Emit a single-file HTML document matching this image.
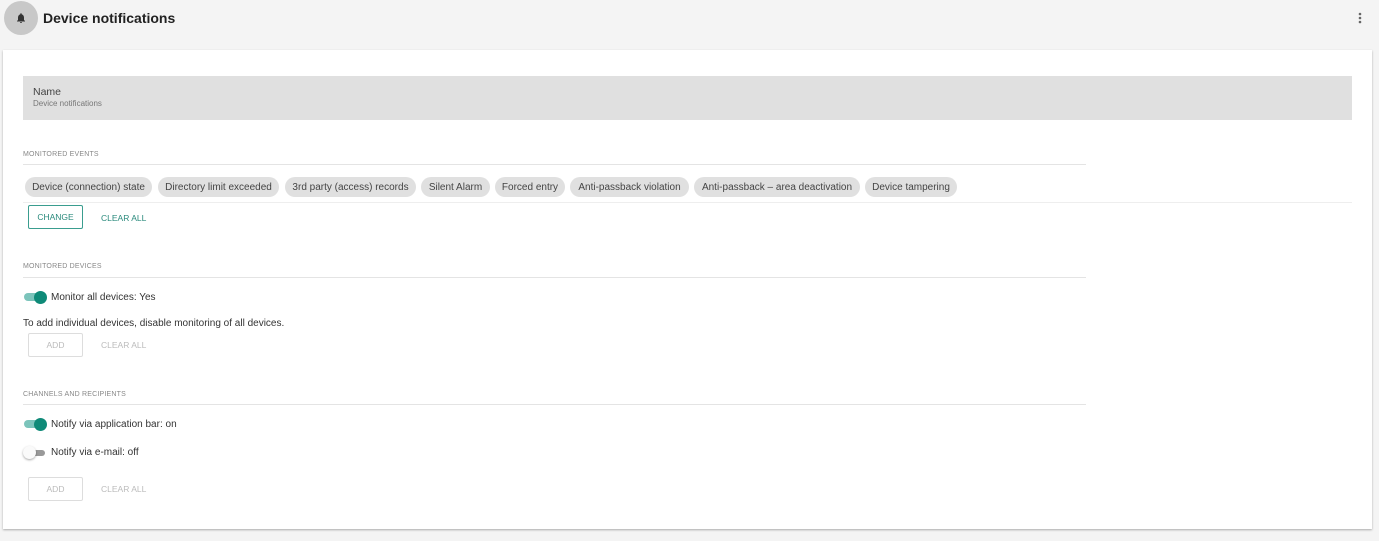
<!DOCTYPE html>
<html><head><meta charset="utf-8"><style>
*{margin:0;padding:0;box-sizing:border-box}
body{width:1379px;height:541px;background:#f4f4f4;font-family:"Liberation Sans",sans-serif;position:relative;overflow:hidden;color:#333}
.a{position:absolute}
.card{left:3px;top:50px;width:1369px;height:479px;background:#fff;box-shadow:0 1px 2px rgba(0,0,0,.3)}
.sec{font-size:7px;color:#888;letter-spacing:.2px}
.line{height:1px;background:#e4e4e4;width:1063px;left:23px}
.chip{top:177px;height:20px;border-radius:10px;background:#e0e0e0;font-size:10px;color:#444;text-align:center;line-height:21px;white-space:nowrap}
.btn{width:55px;height:24px;border:1px solid #ddd;border-radius:2px;font-size:8.5px;color:#bbb;text-align:center;line-height:22px;left:28px}
.clr{font-size:8.5px;left:101px;color:#bbb}
.tog{left:24px;width:22px;height:8px;border-radius:4px;background:#7cc4bb}
.tog i{position:absolute;right:-1px;top:-2.5px;width:13px;height:13px;border-radius:50%;background:#0f8a78}
.txt{font-size:10px;color:#333;left:51px}
</style></head><body>
<div class="a" style="left:4px;top:1px;width:34px;height:34px;border-radius:50%;background:#c8c8c8"></div>
<svg class="a" style="left:15px;top:12px" width="12" height="12" viewBox="0 0 24 24"><path fill="#333" d="M12 22c1.1 0 2-.9 2-2h-4c0 1.1.9 2 2 2zm6-6v-5c0-3.07-1.64-5.64-4.5-6.32V4c0-.83-.67-1.5-1.5-1.5s-1.5.67-1.5 1.5v.68C7.63 5.36 6 7.92 6 11v5l-2 2v1h16v-1l-2-2z"/></svg>
<div class="a" style="left:43px;top:10px;font-size:14px;font-weight:bold;color:#222">Device notifications</div>
<svg class="a" style="left:1358px;top:12px" width="4" height="12"><circle cx="2" cy="2" r="1.3" fill="#666"/><circle cx="2" cy="6" r="1.3" fill="#666"/><circle cx="2" cy="10" r="1.3" fill="#666"/></svg>
<div class="a card"></div>
<div class="a" style="left:23px;top:76px;width:1329px;height:44px;background:#e0e0e0"></div>
<div class="a" style="left:33px;top:86px;font-size:10.5px;color:#444">Name</div>
<div class="a" style="left:33px;top:99px;font-size:8px;color:#777">Device notifications</div>

<div class="a sec" style="left:23px;top:151px">MONITORED EVENTS</div>
<div class="a line" style="top:164px"></div>
<div class="a chip" style="left:25px;width:127px">Device (connection) state</div>
<div class="a chip" style="left:158px;width:121px">Directory limit exceeded</div>
<div class="a chip" style="left:285px;width:131px">3rd party (access) records</div>
<div class="a chip" style="left:421px;width:69px">Silent Alarm</div>
<div class="a chip" style="left:495px;width:70px">Forced entry</div>
<div class="a chip" style="left:570px;width:119px">Anti-passback violation</div>
<div class="a chip" style="left:694px;width:166px">Anti-passback – area deactivation</div>
<div class="a chip" style="left:865px;width:92px">Device tampering</div>
<div class="a" style="left:23px;top:202px;width:1329px;height:1px;background:#eee"></div>
<div class="a btn" style="top:205px;border-color:#3a9d8f;color:#2a8a7c">CHANGE</div>
<div class="a clr" style="top:213px;color:#2a8a7c">CLEAR ALL</div>

<div class="a sec" style="left:23px;top:263px">MONITORED DEVICES</div>
<div class="a line" style="top:277px"></div>
<div class="a tog" style="top:293px"><i></i></div>
<div class="a txt" style="top:292px">Monitor all devices: Yes</div>
<div class="a" style="left:23px;top:318px;font-size:10px;color:#333">To add individual devices, disable monitoring of all devices.</div>
<div class="a btn" style="top:333px">ADD</div>
<div class="a clr" style="top:340px">CLEAR ALL</div>

<div class="a sec" style="left:23px;top:391px">CHANNELS AND RECIPIENTS</div>
<div class="a line" style="top:404px"></div>
<div class="a tog" style="top:420px"><i></i></div>
<div class="a txt" style="top:419px">Notify via application bar: on</div>
<div class="a" style="left:27px;top:450px;width:18px;height:6px;border-radius:3px;background:#999"></div>
<div class="a" style="left:23px;top:446px;width:13px;height:13px;border-radius:50%;background:#fafafa;box-shadow:0 1px 2px rgba(0,0,0,.35)"></div>
<div class="a txt" style="top:447px">Notify via e-mail: off</div>
<div class="a btn" style="top:477px">ADD</div>
<div class="a clr" style="top:484px">CLEAR ALL</div>
</body></html>
